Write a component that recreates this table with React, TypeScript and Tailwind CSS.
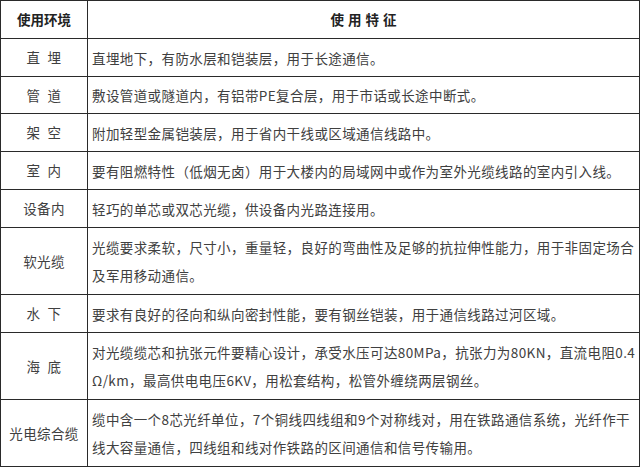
import React from 'react';

type Row = { env: string; lines: string[]; h: string };

const rows: Row[] = [
  { env: '直\u2002埋', lines: ['直埋地下，有防水层和铠装层，用于长途通信。'], h: 'h-[38px]' },
  { env: '管\u2002道', lines: ['敷设管道或隧道内，有铝带PE复合层，用于市话或长途中断式。'], h: 'h-[37px]' },
  { env: '架\u2002空', lines: ['附加轻型金属铠装层，用于省内干线或区域通信线路中。'], h: 'h-[38px]' },
  { env: '室\u2002内', lines: ['要有阻燃特性（低烟无卤）用于大楼内的局域网中或作为室外光缆线路的室内引入线。'], h: 'h-[38px]' },
  { env: '设备内', lines: ['轻巧的单芯或双芯光缆，供设备内光路连接用。'], h: 'h-[38px]' },
  {
    env: '软光缆',
    lines: [
      '光缆要求柔软，尺寸小，重量轻，良好的弯曲性及足够的抗拉伸性能力，用于非固定场合',
      '及军用移动通信。',
    ],
    h: 'h-[67px]',
  },
  { env: '水\u2002下', lines: ['要求有良好的径向和纵向密封性能，要有钢丝铠装，用于通信线路过河区域。'], h: 'h-[38px]' },
  {
    env: '海\u2002底',
    lines: [
      '对光缆缆芯和抗张元件要精心设计，承受水压可达80MPa，抗张力为80KN，直流电阻0.4',
      'Ω/km，最高供电电压6KV，用松套结构，松管外缠绕两层钢丝。',
    ],
    h: 'h-[67px]',
  },
  {
    env: '光电综合缆',
    lines: [
      '缆中含一个8芯光纤单位，7个铜线四线组和9个对称线对，用在铁路通信系统，光纤作干',
      '线大容量通信，四线组和线对作铁路的区间通信和信号传输用。',
    ],
    h: 'h-[67px]',
  },
];

export default function App() {
  return (
    <div className="w-[640px] h-[467px] bg-white overflow-hidden font-['Noto_Sans_CJK_SC','Noto_Sans',sans-serif] text-[13.5px] text-[#404040]">
      <div className="flex flex-col border-t border-l border-r border-[#2a2a2a]">
        <div className="flex h-[38px] border-b border-[#2a2a2a]">
          <div className="w-[87px] shrink-0 border-r border-[#2a2a2a] flex items-center justify-center font-bold text-[#222]">
            使用环境
          </div>
          <div className="flex-1 flex items-center justify-center font-bold text-[#222] tracking-[4px] pl-[4px]">
            使用特征
          </div>
        </div>
        {rows.map((r) => (
          <div key={r.env} className={`flex ${r.h} border-b border-[#2a2a2a]`}>
            <div className="w-[87px] shrink-0 border-r border-[#2a2a2a] flex items-center justify-center whitespace-pre tracking-[0.4px]">
              {r.env}
            </div>
            <div className="flex-1 flex flex-col justify-center pl-[4px] pr-[2px] leading-[28px] whitespace-nowrap tracking-[0.4px]">
              {r.lines.map((l) => (
                <div key={l}>{l}</div>
              ))}
            </div>
          </div>
        ))}
      </div>
    </div>
  );
}
